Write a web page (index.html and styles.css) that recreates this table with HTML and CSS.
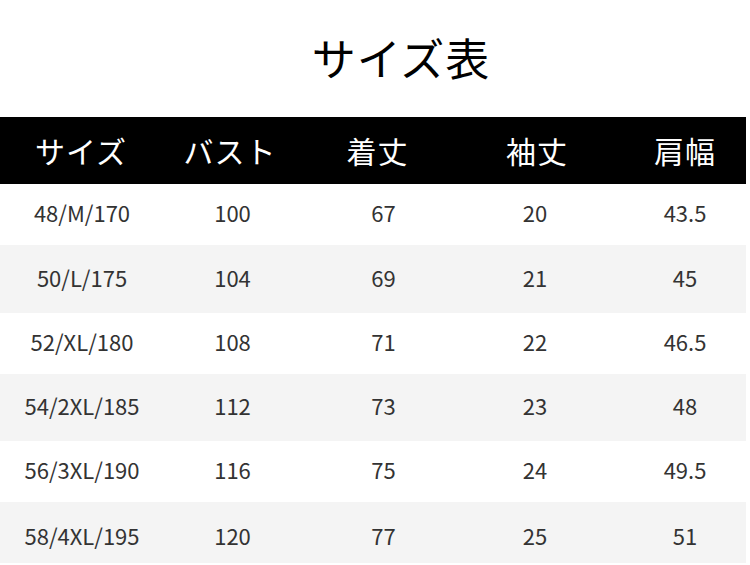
FILE: index.html
```html
<!DOCTYPE html>
<html lang="ja">
<head>
<meta charset="utf-8">
<link rel="stylesheet" href="styles.css">
</head>
<body>
<div class="page">
  <h1 class="title">サイズ表</h1>
  <div class="table">
    <div class="row head"><div>サイズ</div><div>バスト</div><div>着丈</div><div>袖丈</div><div>肩幅</div></div>
    <div class="row r1"><div>48/M/170</div><div>100</div><div>67</div><div>20</div><div>43.5</div></div>
    <div class="row r2 alt"><div>50/L/175</div><div>104</div><div>69</div><div>21</div><div>45</div></div>
    <div class="row r3"><div>52/XL/180</div><div>108</div><div>71</div><div>22</div><div>46.5</div></div>
    <div class="row r4 alt"><div>54/2XL/185</div><div>112</div><div>73</div><div>23</div><div>48</div></div>
    <div class="row r5"><div>56/3XL/190</div><div>116</div><div>75</div><div>24</div><div>49.5</div></div>
    <div class="row r6 alt"><div>58/4XL/195</div><div>120</div><div>77</div><div>25</div><div>51</div></div>
  </div>
</div>
</body>
</html>
```

FILE: styles.css
```css
html, body {
  margin: 0;
  padding: 0;
  background: #ffffff;
}
.page {
  width: 750px;
  height: 565px;
  overflow: hidden;
  font-family: "Noto Sans CJK JP", "Noto Sans", sans-serif;
}
.title {
  margin: 0;
  height: 117px;
  display: flex;
  align-items: center;
  justify-content: center;
  padding-left: 52px;
  padding-bottom: 4px;
  box-sizing: border-box;
  font-size: 44px;
  font-weight: 400;
  letter-spacing: 1px;
  color: #000;
}
.table {
  width: 746px;
  display: flex;
  flex-direction: column;
}
.row {
  display: grid;
  grid-template-columns: 150px 151px 151px 152px 148px;
  padding-left: 7px;
  padding-bottom: 5px;
  box-sizing: border-box;
  align-items: center;
  text-align: center;
  font-size: 22px;
  color: #333;
}
.row.head {
  grid-template-columns: 148px 150px 145px 174px 122px;
  background: #000;
  color: #fff;
  height: 67px;
  font-size: 30px;
  letter-spacing: 1px;
  padding-bottom: 2px;
}
.row.alt { background: #f4f4f4; }
.r1 { height: 61px; }
.r2 { height: 68px; }
.r3 { height: 61px; }
.r4 { height: 67px; }
.r5 { height: 61px; }
.r6 { height: 61px; padding-bottom: 0; padding-top: 4px; }
```
